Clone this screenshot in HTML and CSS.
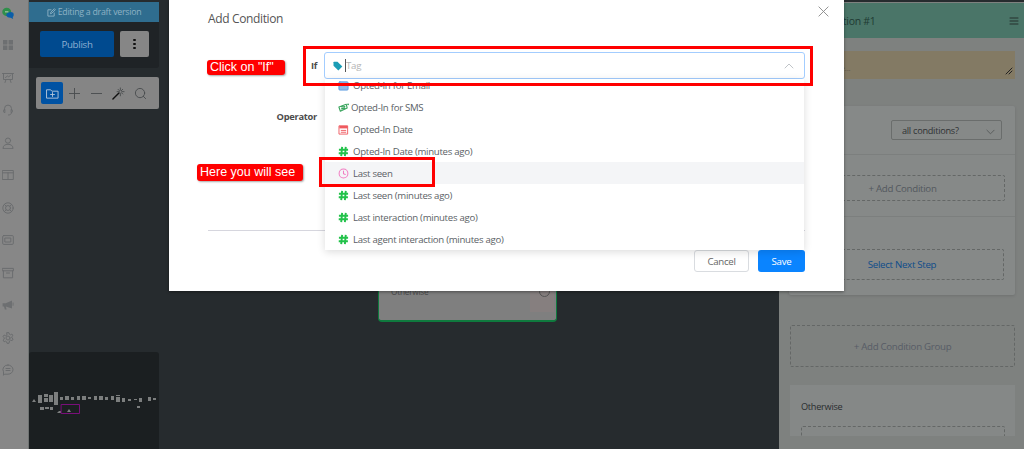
FILE: index.html
```html
<!DOCTYPE html>
<html lang="en">
<head>
<meta charset="utf-8">
<title>Add Condition</title>
<link rel="stylesheet" href="styles.css">
</head>
<body>
<div class="app">
  <nav class="rail">
    <svg class="logo" viewBox="0 0 14 14"><ellipse cx="5.500" cy="5.200" rx="5.200" ry="4.800" fill="#2f8f4a"/><path d="M5 9.500a5 3.600 0 0 1 8-3.500c1 1.500 1 4-.5 5l.5 2.500-3-1.500a5 4 0 0 1-5-2.500z" fill="#0a5ea8"/><rect x="3.500" y="4.600" width="4" height="1" fill="#cfd8cf"/></svg>
    <div class="rail-icons">
      <svg class="ri" viewBox="0 0 12 12"><path class="fillg" d="M1 1h4.400v4.400H1zM6.600 1H11v4.400H6.600zM1 6.600h4.400V11H1zM6.600 6.600H11V11H6.600z"/></svg>
      <svg class="ri" viewBox="0 0 12 12"><path d="M.5 1.500h11M1.500 1.500v6h9v-6M4 7.500l-1 3M8 7.500l1 3M3.500 5.500l2-1.500 1.200 1 2-2"/></svg>
      <svg class="ri" viewBox="0 0 12 12"><path d="M2.500 6V4.600a3.500 3.500 0 0 1 7 0V6M2.500 5.400a1.200 1.200 0 0 0-1 1.300v.6a1.200 1.200 0 0 0 1 1.300zM9.500 5.400a1.200 1.200 0 0 1 1 1.300v.6a1.200 1.200 0 0 1-1 1.300zM9.500 8.600c0 1.600-1.400 2.400-3 2.400"/></svg>
      <svg class="ri" viewBox="0 0 12 12"><circle cx="6" cy="3.600" r="2.600"/><path d="M1 11.300c0-2.800 2.200-4 5-4s5 1.200 5 4z"/></svg>
      <svg class="ri" viewBox="0 0 12 12"><path d="M.7 1.500h10.600v9H.7zM.7 3.800h10.600M6 3.800v6.700"/></svg>
      <svg class="ri" viewBox="0 0 12 12"><circle cx="6" cy="6" r="5.200"/><circle cx="6" cy="6" r="2.500"/><path d="M2.400 2.400l1.800 1.800M9.600 2.400L7.800 4.200M2.400 9.600l1.800-1.800M9.600 9.600L7.800 7.800"/></svg>
      <svg class="ri" viewBox="0 0 12 12"><rect x=".7" y="1.600" width="10.600" height="8.800" rx="1"/><rect x="3.200" y="4" width="5.600" height="4"/></svg>
      <svg class="ri" viewBox="0 0 12 12"><path d="M.6 1.400h10.800v2.400H.6zM1.400 3.800v7h9.200v-7M4.500 6h3"/></svg>
      <svg class="ri" viewBox="0 0 12 12"><path class="fillg" d="M.6 4.200h3.200L10 1.400v8.200L3.800 7.400H.6zM2 7.600h1.800l.8 3H2.800zM10.600 3.600h.9v3.200h-.9z"/></svg>
      <svg class="ri" viewBox="0 0 12 12"><circle cx="6" cy="6" r="2"/><path d="M5 .7h2l.3 1.500 1.300.6 1.300-.8 1 1.700-1.100 1 .1 1.300 1.200 1-1 1.700-1.400-.6-1.200.8L7 11.300H5l-.3-1.400-1.200-.7-1.400.6-1-1.700 1.100-1V5.800L1.100 4.700l1-1.700 1.400.7 1.200-.6z"/></svg>
      <svg class="ri last" viewBox="0 0 12 12"><path d="M6 1a5 4.600 0 0 1 0 9.200H2.500L1.500 11.300V7.800A4.800 4.600 0 0 1 6 1z"/><path d="M4 4.500h4M4 6.500h4"/></svg>
    </div>
  </nav>

  <main class="canvas">
    <div class="side">
      <div class="draft"><svg class="draft-ic" viewBox="0 0 10 10"><path d="M8 5.500V9H1V2h3.500M4 6l.4-1.600L8.200.8l1.100 1.100-3.700 3.700z"/></svg>Editing a draft version</div>
      <div class="publish-bar">
        <button class="publish" type="button">Publish</button>
        <button class="more" type="button" aria-label="More"><i></i><i></i><i></i></button>
      </div>
      <div class="tools">
        <span class="tool active"><svg viewBox="0 0 14 14"><path d="M1 3h4l1.300 1.500H13v7.500H1z"/><path d="M7 6v4.200M4.900 8.100h4.200"/></svg></span>
        <span class="tool"><svg viewBox="0 0 14 14"><path d="M7 1.500v11M1.500 7h11"/></svg></span>
        <span class="tool"><svg viewBox="0 0 14 14"><path d="M1.500 7h11"/></svg></span>
        <span class="tool"><svg viewBox="0 0 14 14"><path class="dark" d="M1 13l6.500-6.500"/><path d="M9 1v2.500M9 7v2.500M5.500 5h2.500M10.500 5H13M6.500 2.500l1.500 1.500M11.500 2.500 10 4M11.500 7.500 10 6"/></svg></span>
        <span class="tool"><svg viewBox="0 0 14 14"><circle cx="6.500" cy="6.500" r="5"/><path d="M10 10l2.500 2.500"/></svg></span>
      </div>
      <div class="minimap">
        <svg class="map" viewBox="0 0 130 97">
          <g fill="#7c7e7e">
            <path d="M3 50l2-3 2 3z"/>
            <rect x="9" y="43" width="4" height="8"/><rect x="15" y="42" width="4" height="3"/><rect x="15" y="46" width="4" height="4"/><rect x="20" y="43" width="4" height="7"/>
            <rect x="25" y="40" width="4" height="13"/><rect x="31" y="45" width="3" height="3"/><rect x="36" y="44" width="4" height="4"/><rect x="42" y="45" width="3" height="3"/><rect x="48" y="44" width="3" height="4"/>
            <rect x="53" y="44" width="4" height="4"/><rect x="59" y="45" width="3" height="2"/><rect x="65" y="44" width="3" height="4"/><rect x="70" y="44" width="4" height="4"/><rect x="76" y="45" width="3" height="3"/>
            <rect x="82" y="44" width="3" height="4"/><rect x="87" y="43" width="4" height="1"/><rect x="87" y="45" width="4" height="5"/><rect x="93" y="46" width="3" height="4"/>
            <rect x="99" y="47" width="3" height="2"/><rect x="105" y="47" width="3" height="1"/><rect x="110" y="46" width="3" height="4"/><rect x="108" y="54" width="3" height="2"/>
            <rect x="119" y="45" width="3" height="4"/><rect x="124" y="46" width="3" height="2"/>
            <rect x="11" y="55" width="4" height="3"/><rect x="16" y="55" width="4" height="2"/><rect x="21" y="55" width="3" height="3"/>
            <path d="M28 61l2-2 2 0v2z"/><path d="M38 60l2-3 2 3z"/>
          </g>
          <rect x="32.500" y="52.500" width="18" height="9" fill="none" stroke="#7a0f7a" stroke-width="1"/>
        </svg>
      </div>
    </div>

    <div class="node"><span class="node-strip"></span><span class="node-label">Otherwise</span><span class="node-dot"></span></div>

    <aside class="panel">
      <header class="panel-head"><span class="panel-title">Condition #1</span>
        <svg class="burger" viewBox="0 0 10 8"><path d="M1 1h8M1 4h8M1 7h8"/></svg>
      </header>
      <div class="note"><span class="note-text">Write a note...</span>
        <svg class="grip" viewBox="0 0 8 8"><path d="M1 7l6-6M4 7l3-3"/></svg>
      </div>
      <section class="card">
        <div class="match"><span class="select">all conditions?<svg class="sel-ch" viewBox="0 0 10 6"><path d="M1 1l4 4 4-4"/></svg></span></div>
        <div class="cond-slot"><div class="dash add-cond">+ Add Condition</div></div>
        <div class="next-slot"><div class="dash next">Select Next Step</div></div>
      </section>
      <div class="dash group">+ Add Condition Group</div>
      <section class="other">
        <span class="other-label">Otherwise</span>
        <div class="dash other-step"></div>
      </section>
    </aside>
  </main>
</div>

<div class="modal" role="dialog" aria-label="Add Condition">
  <div class="modal-head">
    <h2 class="modal-title">Add Condition</h2>
    <svg class="close" viewBox="0 0 12 12"><path d="M1 1l10 10M11 1L1 11"/></svg>
  </div>
  <div class="field if-row">
    <label class="lbl">If</label>
    <div class="input focus">
      <svg class="tag" viewBox="0 0 10 10"><path d="M.5 1.200 .5 4.800 5.300 9.500 9.300 5.500 4.500 .8H1z"/></svg>
      <span class="caret"></span><span class="ph">Tag</span>
      <svg class="chev" viewBox="0 0 10 6"><path d="M1 5l4-4 4 4"/></svg>
    </div>
  </div>
  <div class="field op-row">
    <label class="lbl">Operator</label>
  </div>
  <hr class="rule">
  <div class="actions">
    <button class="btn cancel" type="button">Cancel</button>
    <button class="btn save" type="button">Save</button>
  </div>

  <ul class="drop">
    <li class="opt"><svg class="oi" viewBox="0 0 12 12"><rect x="1" y="2" width="10" height="9" rx="1" fill="#8fb9e8" stroke="#5c9ae0"/></svg>Opted-In for Email</li>
    <li class="opt tight"><svg class="oi" viewBox="0 0 12 12"><path class="sms" d="M1 5.500 9 2.500 10 6.500 2.500 10zM4 5.500l3.500-.5M3.800 7.500l3.500-1"/><circle cx="11" cy="2.500" r="1" fill="#36a35a"/></svg>Opted-In for SMS</li>
    <li class="opt"><svg class="oi" viewBox="0 0 12 12"><path class="calband" d="M1.500 2h9v2.800h-9z"/><path class="cal" d="M1.500 2h9v9h-9zM3.500 7h5M3.500 9h5"/></svg>Opted-In Date</li>
    <li class="opt"><svg class="oi" viewBox="0 0 12 12"><path class="hash" d="M4.500 1 3.500 11M8.500 1 7.500 11M1 4h10M.8 8h10"/></svg>Opted-In Date (minutes ago)</li>
    <li class="opt hover"><svg class="oi" viewBox="0 0 12 12"><circle class="clock" cx="6" cy="6" r="4.800"/><path class="clock" d="M6 3.200V6.300L8 7"/></svg>Last seen</li>
    <li class="opt"><svg class="oi" viewBox="0 0 12 12"><path class="hash" d="M4.500 1 3.500 11M8.500 1 7.500 11M1 4h10M.8 8h10"/></svg>Last seen (minutes ago)</li>
    <li class="opt"><svg class="oi" viewBox="0 0 12 12"><path class="hash" d="M4.500 1 3.500 11M8.500 1 7.500 11M1 4h10M.8 8h10"/></svg>Last interaction (minutes ago)</li>
    <li class="opt"><svg class="oi" viewBox="0 0 12 12"><path class="hash" d="M4.500 1 3.500 11M8.500 1 7.500 11M1 4h10M.8 8h10"/></svg>Last agent interaction (minutes ago)</li>
  </ul>
</div>

<span class="callout call-if">Click on "If"</span>
<span class="callout call-see">Here you will see</span>
<div class="redbox box-if"></div>
<div class="redbox box-see"></div>
</body>
</html>
```
FILE: styles.css
```css
* { box-sizing: border-box; letter-spacing: -.03em; }
html, body { margin: 0; height: 100%; overflow: hidden; }
body { font-family: "Open Sans", "Noto Sans", sans-serif; background: #808080; position: relative; }
svg { display: block; fill: none; stroke-linecap: round; stroke-linejoin: round; }
button { font-family: inherit; cursor: pointer; }

.app { display: flex; height: 449px; padding-top: 2px; background: #8a8a8a; }

/* icon rail */
.rail { width: 29px; flex: none; background: #878787; margin-top: -2px; padding: 7px 0 0 2px; border-right: 1px solid #6f7372; }
.logo { width: 12px; height: 13px; }
.rail-icons { display: flex; flex-direction: column; gap: 20.500px; margin-top: 19px; }
.ri { width: 12px; height: 12px; stroke: #6b6d6f; stroke-width: 1; }
.ri .fillg { fill: #6d6f71; stroke: none; }

/* canvas */
.canvas { flex: 1; position: relative; display: flex; justify-content: space-between; background: #262b2e; margin-top: -2px; padding-top: 2px; }
.side { width: 130px; display: flex; flex-direction: column; }
.draft { height: 20px; background: #2f6d8f; color: #8eb2c4; font-size: 8.800px; display: flex; align-items: center; justify-content: center; gap: 2px; }
.draft-ic { width: 9px; height: 9px; stroke: #8eb2c4; stroke-width: 1; }
.publish-bar { height: 46px; background: #1f2326; border-radius: 0 0 3px 0; display: flex; align-items: center; gap: 6px; padding: 0 0 2px 11px; }
.publish { width: 74px; height: 26px; border: 0; border-radius: 2px; background: #004a8f; color: #8db0d3; font-size: 9.700px; padding: 0; }
.more { width: 29px; height: 26px; border: 0; border-radius: 2px; background: #868686; display: flex; flex-direction: column; align-items: center; justify-content: center; gap: 1.500px; padding: 0; }
.more i { width: 2.500px; height: 2.500px; background: #111; border-radius: 50%; }
.tools { width: 123px; height: 32px; margin: 9px 0 0 7px; background: #858585; border-radius: 2px; display: flex; align-items: center; padding-left: 5px; }
.tool { width: 22px; height: 22px; display: flex; align-items: center; justify-content: center; border-radius: 2px; }
.tool svg { width: 13px; height: 13px; stroke: #4a4d4f; stroke-width: 1; }
.tool svg .dark { stroke: #111; stroke-width: 1.500; }
.tool.active { background: #0052a3; }
.tool.active svg { stroke: #b4c6da; }
.minimap { margin-top: auto; height: 97px; background: #1b1f21; border-radius: 3px 3px 0 0; }
.map { width: 130px; height: 97px; }

/* flow node, on the free canvas */
.node { position: absolute; left: 349px; top: 270px; width: 179px; height: 52px; background: #7f7f7f; border: 1px solid #0f7a3e; border-bottom-width: 2px; border-radius: 4px; }
.node-label { position: absolute; left: 12px; top: 15px; font-size: 8.300px; color: #4c4c4c; }
.node-dot { position: absolute; left: 160px; top: 15px; width: 11px; height: 11px; border: 1px solid #555; border-radius: 50%; }
.node-strip { position: absolute; left: 151px; top: 20px; width: 24px; height: 21px; background: #867f7f; }

/* right panel */
.panel { width: 245px; flex: none; background: #7e817f; display: flex; flex-direction: column; align-items: stretch; padding-top: 1px; }
.panel-head { height: 35px; flex: none; background: #4a7568; display: flex; align-items: center; justify-content: space-between; padding: 0 5px 0 37px; color: #1f3a33; }
.panel-title { font-size: 10.500px; white-space: nowrap; }
.burger { width: 10px; height: 8px; stroke: #25302d; stroke-width: 1; }
.note { height: 28px; margin: 13px 9px 0 0; background: #837a64; position: relative; flex: none; font-size: 8px; color: #5d5748; display: flex; align-items: center; padding: 4px 0 0 23px; }
.note-text { white-space: nowrap; }
.grip { position: absolute; right: 2px; bottom: 4px; width: 8px; height: 8px; stroke: #222; stroke-width: 1; }
.card { margin: 27px 9px 0 10px; height: 189px; flex: none; background: #868988; border-radius: 2px; box-shadow: 0 1px 3px rgba(0,0,0,.12); display: flex; flex-direction: column; }
.match { height: 49px; display: flex; justify-content: flex-end; padding: 14px 13px 0 0; border-bottom: 1px solid #7c7f7e; flex: none; }
.select { width: 111px; height: 20px; border: 1px solid #6a6d6c; border-radius: 2px; font-size: 9.200px; color: #2f3234; padding-left: 10px; display: flex; align-items: center; justify-content: space-between; padding-right: 6px; }
.sel-ch { width: 9px; height: 6px; stroke: #565959; stroke-width: 1; margin-top: 3px; }
.dash { border: 1px dashed #646766; display: flex; align-items: center; justify-content: center; border-radius: 2px; color: #53585e; font-size: 9.700px; }
.cond-slot { height: 62px; padding: 20px 10px 0 11px; border-bottom: 1px solid #7c7f7e; flex: none; }
.add-cond { height: 26px; }
.next-slot { padding: 32px 11px 0 11px; }
.next { height: 31px; color: #0e4c8a; }
.group { margin: 30px 9px 0 11px; height: 42px; flex: none; color: #575c66; }
.other { margin: 18px 9px 0 11px; height: 51px; flex: none; background: #858887; padding: 15px 10px 0 11px; display: flex; flex-direction: column; overflow: hidden; }
.other-label { font-size: 9.200px; line-height: 14px; color: #2a2d2f; }
.other-step { margin-top: 12px; height: 30px; flex: none; }

/* modal */
.modal { position: absolute; left: 169px; top: 0; width: 675px; height: 291px; background: #fff; box-shadow: 0 1px 3px rgba(0,0,0,.4); padding: 9px 39px 0; }
.modal-head { display: flex; justify-content: space-between; height: 20px; }
.modal-title { margin: 0; font-weight: 400; font-size: 12px; line-height: 20px; color: #555; }
.close { width: 11px; height: 11px; stroke: #8a8a8a; stroke-width: 1; margin: -3px -24px 0 0; }
.field { display: grid; grid-template-columns: 109px 481px; column-gap: 7px; align-items: center; min-height: 27px; }
.if-row { margin-top: 23px; }
.op-row { margin-top: 24px; }
.lbl { text-align: right; font-size: 9.300px; font-weight: 700; color: #4c4c4c; }
.input { height: 27px; border: 1px solid #dfe3e8; border-radius: 3px; display: flex; align-items: center; padding: 0 10px 0 8px; }
.input.focus { border-color: #a3cdff; }
.tag { width: 10px; height: 10px; fill: #1b9db6; margin-right: 2px; }
.caret { width: 1px; height: 13px; background: #555; }
.ph { font-size: 9.700px; color: #b5b5b5; }
.chev { width: 10px; height: 6px; stroke: #c0c4c8; stroke-width: 1; margin-left: auto; }
.rule { border: 0; border-top: 1px solid #d6d6de; margin: 100px 0 0; }
.actions { display: flex; justify-content: flex-end; gap: 9px; margin-top: 19px; }
.btn { height: 22px; border-radius: 3px; font-size: 9.700px; padding: 0; }
.cancel { width: 55px; background: #fff; border: 1px solid #d9dce0; color: #666; }
.save { width: 47px; background: #0a84ff; border: 0; color: #fff; }

/* open dropdown */
.drop { position: absolute; left: 156px; top: 79px; width: 479px; height: 171px; margin: 0; padding: 0; list-style: none; overflow: hidden; background: #fff; box-shadow: 0 2px 8px rgba(0,0,0,.14); }
.opt { height: 22.100px; display: flex; align-items: center; padding-left: 13px; gap: 4px; font-size: 9.650px; color: #5b5f66; white-space: nowrap; }
.opt:first-child { margin-top: -5px; }
.opt.hover { background: #f4f5f7; }
.opt.tight { gap: 2px; }
.oi { width: 11px; height: 11px; flex: none; }
.opt .hash { stroke: #22c24a; stroke-width: 2.100; stroke-linecap: butt; }
.opt .cal { stroke: #ef5a5f; stroke-width: 1; }
.opt .calband { fill: #ef5a5f; }
.opt .clock { stroke: #f27cc2; stroke-width: 1.100; }
.opt .sms { stroke: #36a35a; stroke-width: 1.200; }

/* tutorial annotations */
.callout { position: absolute; background: #f00; color: #fff; font-family: "Liberation Sans", sans-serif; font-size: 12.500px; line-height: 15px; border-radius: 3px; padding: 0 3px; white-space: nowrap; letter-spacing: 0; box-shadow: 1px 1px 2px rgba(0,0,0,.35); }
.call-if { left: 207px; top: 60px; width: 78px; height: 15px; }
.call-see { left: 197px; top: 164px; width: 106px; height: 17px; line-height: 17px; }
.redbox { position: absolute; border: 3px solid #f00; }
.box-if { left: 303px; top: 46px; width: 510px; height: 40px; }
.box-see { left: 319px; top: 157px; width: 116px; height: 30px; }
```
